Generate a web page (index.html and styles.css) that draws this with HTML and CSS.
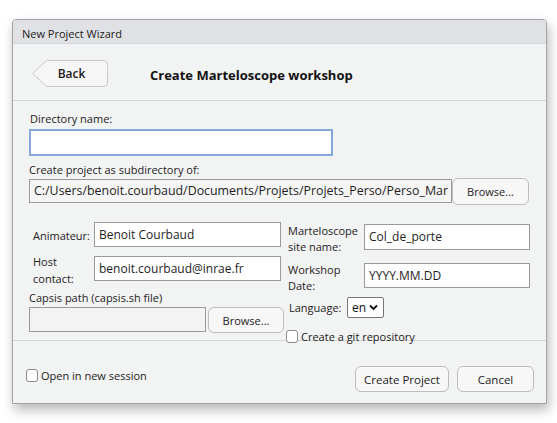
FILE: index.html
```html
<!DOCTYPE html>
<html>
<head>
<meta charset="utf-8">
<link rel="stylesheet" href="styles.css">
</head>
<body>
<div class="window">
  <div class="titlebar">New Project Wizard</div>
  <div class="header">
    <div class="back">
      <svg class="back-shape" width="76" height="27" viewBox="0 0 76 27"><path d="M14.5,0.5 H71 A4,4 0 0 1 75.5,4.5 V22.5 A4,4 0 0 1 71.5,26.5 H14.5 L0.7,13.5 Z" fill="#f6f6f6" stroke="#c9c9c9" stroke-width="1"/></svg>
      <span class="back-text">Back</span>
    </div>
    <div class="htitle">Create Marteloscope workshop</div>
  </div>
  <div class="content">
    <div class="lbl l1">Directory name:</div>
    <div class="dir-input"></div>
    <div class="lbl l2">Create project as subdirectory of:</div>
    <div class="path-row">
      <div class="path"><span class="path-text">C:/Users/benoit.courbaud/Documents/Projets/Projets_Perso/Perso_Mar</span></div>
      <div class="btn browse1">Browse...</div>
    </div>
    <div class="grid">
      <div class="col left">
        <div class="frow r1">
          <div class="flbl fl-anim">Animateur:</div>
          <div class="tin tin-left">Benoit Courbaud</div>
        </div>
        <div class="frow r2">
          <div class="flbl fl-host">Host<br>contact:</div>
          <div class="tin tin-left">benoit.courbaud@inrae.fr</div>
        </div>
        <div class="lbl l3">Capsis path (capsis.sh file)</div>
        <div class="capsis-row">
          <div class="capsis"></div>
          <div class="btn browse2">Browse...</div>
        </div>
      </div>
      <div class="col right">
        <div class="frow rr1">
          <div class="flbl fl-right">Marteloscope<br>site name:</div>
          <div class="tin tin-right t1">Col_de_porte</div>
        </div>
        <div class="frow rr2">
          <div class="flbl fl-right">Workshop<br>Date:</div>
          <div class="tin tin-right t2">YYYY.MM.DD</div>
        </div>
        <div class="lang-row">
          <div class="flbl fl-lang">Language:</div>
          <div class="select">en<svg width="9" height="7" viewBox="0 0 9 7"><path d="M1,1.5 L4.5,5 L8,1.5" fill="none" stroke="#111" stroke-width="1.8"/></svg></div>
        </div>
        <div class="chk-row git">
          <span class="chk"></span><span class="chk-text">Create a git repository</span>
        </div>
      </div>
    </div>
  </div>
  <div class="footer">
    <div class="chk-row session">
      <span class="chk"></span><span class="chk-text">Open in new session</span>
    </div>
    <div class="btns">
      <div class="btn fbtn create">Create Project</div>
      <div class="btn fbtn cancel">Cancel</div>
    </div>
  </div>
</div>
</body>
</html>
```

FILE: styles.css
```css
* { box-sizing: border-box; }
html, body { margin: 0; padding: 0; background: #ffffff; }
body {
  font-family: "Open Sans", "Noto Sans", sans-serif;
  color: #1e1e1e;
  width: 557px;
  height: 423px;
  overflow: hidden;
}
.window {
  margin: 19px 0 0 12px;
  width: 535px;
  height: 385px;
  border: 1px solid #a3a3a3;
  border-radius: 4px 4px 0 0;
  background: #f2f3f3;
  box-shadow: 2px 6px 12px rgba(0,0,0,0.28);
  overflow: hidden;
}
.titlebar {
  height: 24px;
  background: #e0e1e4;
  border-bottom: 1px solid #d6d7da;
  font-size: 11px;
  line-height: 24px;
  padding-left: 9px;
  padding-top: 2px;
  color: #222;
}
.header {
  height: 57px;
  border-bottom: 1px solid #d3d4d4;
  display: flex;
  align-items: center;
  padding-left: 19px;
  padding-top: 3px;
}
.back {
  position: relative;
  width: 76px;
  height: 27px;
  display: flex;
  align-items: center;
  justify-content: center;
  padding-left: 3px;
}
.back-shape { position: absolute; left: 0; top: 0; }
.back-text {
  position: relative;
  font-size: 12px;
  font-weight: 600;
  color: #1a1a1a;
}
.htitle {
  margin-left: 42px;
  font-size: 13px;
  font-weight: 700;
  color: #111;
  margin-top: 2px;
}
.content {
  height: 240px;
  border-bottom: 1px solid #d3d4d4;
  padding-left: 16px;
}
.lbl {
  font-size: 11px;
  line-height: 16px;
  color: #222;
}
.l1 { padding-top: 10px; padding-left: 1px; }
.dir-input {
  margin-top: 2px;
  width: 304px;
  height: 27px;
  background: #ffffff;
  border: 2px solid #86a7dc;
}
.l2 { margin-top: 6px; }
.path-row {
  display: flex;
  align-items: center;
  height: 26px;
}
.path {
  width: 423px;
  height: 24px;
  border: 1px solid #9a9a9a;
  background: #f5f5f5;
  font-size: 12.4px;
  line-height: 22px;
  padding-left: 4px;
  white-space: nowrap;
  overflow: hidden;
  color: #1e1e1e;
}
.path-text { display: inline-block; }
.btn {
  background: #f7f7f7;
  border: 1px solid #bdbdbd;
  border-radius: 6px;
  font-size: 11px;
  color: #222;
  display: flex;
  align-items: center;
  justify-content: center;
}
.browse1 { width: 77px; height: 27px; }
.grid {
  display: flex;
  margin-top: 18px;
}
.col { display: flex; flex-direction: column; }
.left { width: 257px; }
.right { width: 245px; }
.frow { display: flex; align-items: center; }
.r1 { height: 25px; }
.r2 { height: 25px; margin-top: 9px; }
.flbl { font-size: 11px; line-height: 16px; color: #222; }
.fl-anim { width: 65px; padding-left: 4px; padding-top: 2px; }
.fl-host { width: 65px; padding-left: 4px; line-height: 17px; padding-top: 3px; }
.tin {
  height: 25px;
  background: #ffffff;
  border: 1px solid #9a9a9a;
  font-size: 12px;
  line-height: 23px;
  padding-left: 4px;
  white-space: nowrap;
  overflow: hidden;
  color: #1e1e1e;
}
.tin-left { width: 187px; }
.l3 { margin-top: 9px; }
.capsis-row {
  display: flex;
  align-items: flex-start;
  margin-top: 1px;
  gap: 2px;
}
.capsis {
  width: 177px;
  height: 25px;
  border: 1px solid #9a9a9a;
  background: #f3f3f3;
}
.browse2 { width: 76px; height: 26px; }
.rr1 { height: 26px; margin-top: 2px; }
.rr2 { height: 25px; margin-top: 13px; }
.fl-right { width: 78px; padding-left: 2px; padding-top: 4px; }
.tin-right { width: 166px; }
.t1 { height: 26px; line-height: 24px; }
.lang-row {
  display: flex;
  align-items: center;
  margin-top: 8px;
  height: 22px;
}
.fl-lang { width: 61px; padding-left: 3px; padding-top: 1px; }
.select {
  width: 37px;
  height: 21px;
  border: 1px solid #767676;
  border-radius: 2px;
  background: #ffffff;
  font-size: 12px;
  display: flex;
  align-items: center;
  padding-left: 4px;
  gap: 3px;
  color: #111;
}
.chk-row { display: flex; align-items: center; }
.git { margin-top: 12px; }
.chk {
  width: 12px;
  height: 13px;
  border: 1px solid #8a8a8a;
  border-radius: 3px;
  background: #ffffff;
}
.chk-text { font-size: 11px; margin-left: 3px; color: #222; line-height: 13px; }
.footer {
  display: flex;
  justify-content: space-between;
  align-items: flex-start;
  padding: 25px 12px 0 13px;
}
.session { margin-top: 3px; }
.btns { display: flex; gap: 8px; }
.fbtn { height: 26px; font-size: 11.5px; }
.create { width: 94px; }
.cancel { width: 77px; }
```
